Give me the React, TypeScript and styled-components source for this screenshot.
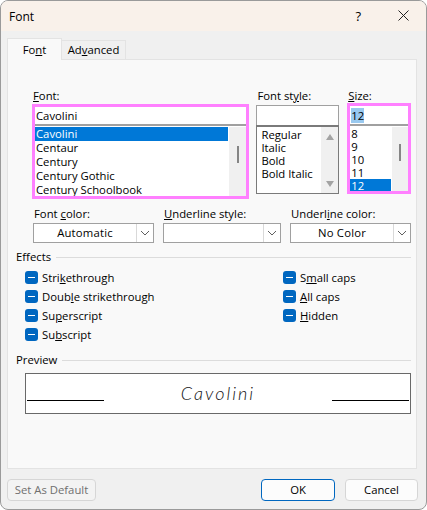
import React from "react";
import styled, { createGlobalStyle } from "styled-components";

const GlobalStyle = createGlobalStyle`
  html, body {
    margin: 0;
    padding: 0;
    background: #fff;
  }
  * {
    box-sizing: border-box;
  }
`;

const fontRows = ["Cavolini", "Centaur", "Century", "Century Gothic", "Century Schoolbook"];
const styleRows = ["Regular", "Italic", "Bold", "Bold Italic"];
const sizeRows = ["8", "9", "10", "11", "12"];

const Chevron = () => (
  <svg width="10" height="6" viewBox="0 0 10 6" fill="none">
    <path d="M1 1l4 4 4-4" stroke="#606060" strokeWidth="1" />
  </svg>
);

const Dropdown: React.FC<{ label: React.ReactNode; value?: string; width: number }> = ({ label, value, width }) => (
  <DropField $width={width}>
    <Label>{label}</Label>
    <DropBox>
      <DropValue>{value}</DropValue>
      <DropArrow>
        <Chevron />
      </DropArrow>
    </DropBox>
  </DropField>
);

const Effect: React.FC<{ children: React.ReactNode }> = ({ children }) => (
  <EffectRow>
    <CheckBox>
      <CheckDash />
    </CheckBox>
    <span>{children}</span>
  </EffectRow>
);

const App: React.FC = () => (
  <>
    <GlobalStyle />
    <Window>
      <TitleBar>
        <TitleText>Font</TitleText>
        <TitleActions>
          <HelpMark>?</HelpMark>
          <svg width="11" height="11" viewBox="0 0 11 11" fill="none">
            <path d="M.5.5l10 10M10.5.5l-10 10" stroke="#222" strokeWidth="1" />
          </svg>
        </TitleActions>
      </TitleBar>
      <Body>
        <Tabs>
          <Tab $active $width={55}>
            Fo<u>n</u>t
          </Tab>
          <Tab $width={64}>
            Ad<u>v</u>anced
          </Tab>
        </Tabs>
        <Panel>
          <ListsRow>
            <FontColumn>
              <Label>
                <u>F</u>ont:
              </Label>
              <Highlight>
                <TextInput>Cavolini</TextInput>
                <ListBox $height={70}>
                  <Rows>
                    {fontRows.map((row, i) => (
                      <Row key={row} $selected={i === 0} $height={14}>
                        {row}
                      </Row>
                    ))}
                  </Rows>
                  <ScrollTrack $width={17}>
                    <Thumb $top={19} />
                  </ScrollTrack>
                </ListBox>
              </Highlight>
            </FontColumn>
            <StyleColumn>
              <Label>
                Font st<u>y</u>le:
              </Label>
              <PlainInput />
              <PlainList>
                <Rows $inset={3}>
                  {styleRows.map((row) => (
                    <Row key={row} $height={13}>
                      {row}
                    </Row>
                  ))}
                </Rows>
                <ArrowTrack>
                  <ScrollArrow />
                  <ScrollArrow $down />
                </ArrowTrack>
              </PlainList>
            </StyleColumn>
            <SizeColumn>
              <Label>
                <u>S</u>ize:
              </Label>
              <SizeHighlight>
                <SizeInput>
                  <Selected>12</Selected>
                </SizeInput>
                <ListBox $height={65}>
                  <Rows>
                    {sizeRows.map((row) => (
                      <Row key={row} $selected={row === "12"} $height={13}>
                        {row}
                      </Row>
                    ))}
                  </Rows>
                  <ScrollTrack $width={16}>
                    <Thumb $top={17} />
                  </ScrollTrack>
                </ListBox>
              </SizeHighlight>
            </SizeColumn>
          </ListsRow>

          <DropRow>
            <Dropdown
              width={121}
              value="Automatic"
              label={
                <>
                  Font <u>c</u>olor:
                </>
              }
            />
            <Dropdown
              width={118}
              label={
                <>
                  <u>U</u>nderline style:
                </>
              }
            />
            <Dropdown
              width={121}
              value="No Color"
              label={
                <>
                  Underl<u>i</u>ne color:
                </>
              }
            />
          </DropRow>

          <SectionHead $top={0}>
            <span>Effects</span>
            <SectionLine />
          </SectionHead>
          <EffectsGrid>
            <EffectColumn>
              <Effect>
                Stri<u>k</u>ethrough
              </Effect>
              <Effect>
                Doub<u>l</u>e strikethrough
              </Effect>
              <Effect>
                Su<u>p</u>erscript
              </Effect>
              <Effect>
                Su<u>b</u>script
              </Effect>
            </EffectColumn>
            <EffectColumn>
              <Effect>
                S<u>m</u>all caps
              </Effect>
              <Effect>
                <u>A</u>ll caps
              </Effect>
              <Effect>
                <u>H</u>idden
              </Effect>
            </EffectColumn>
          </EffectsGrid>

          <SectionHead $top={9}>
            <span>Preview</span>
            <SectionLine />
          </SectionHead>
          <PreviewBox>
            <PreviewRule />
            <PreviewText>Cavolini</PreviewText>
            <PreviewRule />
          </PreviewBox>
        </Panel>
        <Footer>
          <FooterButton $width={89} $disabled>
            Set As Default
          </FooterButton>
          <FooterRight>
            <FooterButton $width={74} $primary>
              OK
            </FooterButton>
            <FooterButton $width={73}>Cancel</FooterButton>
          </FooterRight>
        </Footer>
      </Body>
    </Window>
  </>
);

const Window = styled.div`
  width: 427px;
  height: 510px;
  display: flex;
  flex-direction: column;
  border: 1px solid #9a9a9a;
  border-radius: 8px;
  overflow: hidden;
  background: #f0f0f0;
  color: #000;
  font-family: "Open Sans", "Noto Sans", sans-serif;
  font-size: 11.3px;
  line-height: 14px;
`;

const TitleBar = styled.div`
  height: 30px;
  flex: none;
  display: flex;
  align-items: center;
  justify-content: space-between;
  padding: 0 17px 0 8px;
  background: #f9f1ea;
`;

const TitleText = styled.div`
  margin-top: 1px;
  font-size: 12px;
`;

const TitleActions = styled.div`
  display: flex;
  align-items: center;
  gap: 37px;
  margin-top: -1px;
`;

const HelpMark = styled.span`
  font-size: 13px;
`;

const Body = styled.div`
  flex: 1;
  display: flex;
  flex-direction: column;
  padding: 7px 9px 8px 6px;
  min-height: 0;
`;

const Tabs = styled.div`
  display: flex;
  align-items: flex-end;
  height: 22px;
  position: relative;
  z-index: 1;
  margin-bottom: -1px;
`;

const Tab = styled.div<{ $active?: boolean; $width: number }>`
  width: ${(p) => p.$width}px;
  height: ${(p) => (p.$active ? 22 : 20)}px;
  display: flex;
  align-items: center;
  justify-content: center;
  white-space: pre;
  background: ${(p) => (p.$active ? "#f9f9f9" : "#f0f0f0")};
  border: 1px solid #e3e3e3;
  border-bottom: ${(p) => (p.$active ? "none" : "1px solid #e3e3e3")};
  border-left: ${(p) => (p.$active ? "1px solid #e3e3e3" : "none")};
`;

const Panel = styled.div`
  height: 410px;
  flex: none;
  padding: 28px 5px 0 8px;
  background: #f9f9f9;
  border: 1px solid #e3e3e3;
`;

const ListsRow = styled.div`
  display: flex;
  height: 112px;
`;

const Label = styled.div`
  height: 15px;
  line-height: 14px;
  padding-left: 1px;
  white-space: pre;
`;

const FontColumn = styled.div`
  width: 218px;
  margin-left: 16px;
  padding-top: 1px;
`;

const StyleColumn = styled.div`
  width: 83px;
  margin-left: 7px;
  padding-top: 1px;
`;

const SizeColumn = styled.div`
  width: 64px;
  margin-left: 8px;
  padding-top: 1px;
`;

const Highlight = styled.div`
  height: 95px;
  border: 3px solid #ff80ff;
  background: #fff;
`;

const SizeHighlight = styled(Highlight)`
  height: 91px;
  margin-top: -1px;
`;

const TextInput = styled.div`
  height: 19px;
  padding: 2px 0 0 1px;
  border-bottom: 2px solid #a0a0a0;
  background: #fff;
`;

const SizeInput = styled(TextInput)`
  height: 20px;
  padding-top: 3px;
`;

const Selected = styled.span`
  background: #99c9ef;
`;

const ListBox = styled.div<{ $height: number }>`
  height: ${(p) => p.$height}px;
  display: flex;
  padding-top: 1px;
  overflow: hidden;
  background: #fff;
`;

const Rows = styled.div<{ $inset?: number }>`
  flex: 1;
  padding-top: ${(p) => (p.$inset ? 1 : 0)}px;
  padding-left: ${(p) => p.$inset ?? 0}px;
`;

const Row = styled.div<{ $selected?: boolean; $height: number }>`
  height: ${(p) => p.$height}px;
  line-height: ${(p) => p.$height}px;
  padding-left: 1px;
  white-space: pre;
  background: ${(p) => (p.$selected ? "#0078d7" : "transparent")};
  color: ${(p) => (p.$selected ? "#fff" : "#000")};
`;

const ScrollTrack = styled.div<{ $width: number }>`
  width: ${(p) => p.$width}px;
  flex: none;
  margin-left: 1px;
  display: flex;
  justify-content: center;
  align-items: flex-start;
  background: #f0f0f0;
`;

const Thumb = styled.div<{ $top: number }>`
  width: 2px;
  height: 17px;
  margin-top: ${(p) => p.$top}px;
  background: #858585;
`;

const PlainInput = styled.div`
  height: 21px;
  margin-top: 1px;
  background: #fff;
  border: 1px solid #a0a0a0;
`;

const PlainList = styled.div`
  height: 69px;
  margin-top: -1px;
  display: flex;
  background: #fff;
  border: 1px solid #7a7a7a;
  border-top-width: 2px;
`;

const ArrowTrack = styled.div`
  width: 17px;
  flex: none;
  display: flex;
  flex-direction: column;
  align-items: center;
  justify-content: space-between;
  padding: 7px 0 6px;
  background: #f0f0f0;
`;

const ScrollArrow = styled.div<{ $down?: boolean }>`
  width: 0;
  height: 0;
  border-left: 4.5px solid transparent;
  border-right: 4.5px solid transparent;
  border-${(p) => (p.$down ? "top" : "bottom")}: 6px solid #a3a3a3;
`;

const DropRow = styled.div`
  display: flex;
  gap: 9px;
  margin-left: 17px;
  height: 50px;
  padding-top: 7px;
`;

const DropField = styled.div<{ $width: number }>`
  width: ${(p) => p.$width}px;
`;

const DropBox = styled.div`
  height: 20px;
  margin-top: 1px;
  display: flex;
  background: #fff;
  border: 1px solid #a0a0a0;
`;

const DropValue = styled.div`
  flex: 1;
  text-align: center;
  line-height: 18px;
  letter-spacing: 0.2px;
`;

const DropArrow = styled.div`
  width: 17px;
  flex: none;
  display: flex;
  align-items: center;
  justify-content: center;
  border-left: 1px solid #d9d9d9;
`;

const SectionHead = styled.div<{ $top: number }>`
  display: flex;
  align-items: center;
  gap: 5px;
  height: 14px;
  margin-top: ${(p) => p.$top}px;
`;

const SectionLine = styled.div`
  flex: 1;
  height: 1px;
  background: #dcdcdc;
`;

const EffectsGrid = styled.div`
  display: grid;
  grid-template-columns: 258px 1fr;
  margin: 4px 0 0 9px;
  height: 76px;
`;

const EffectColumn = styled.div`
  display: flex;
  flex-direction: column;
`;

const EffectRow = styled.div`
  height: 19px;
  display: flex;
  align-items: center;
  gap: 4px;
  white-space: pre;
`;

const CheckBox = styled.div`
  width: 13px;
  height: 13px;
  display: flex;
  align-items: center;
  justify-content: center;
  border-radius: 3px;
  background: #0067c0;
`;

const CheckDash = styled.div`
  width: 7px;
  height: 1px;
  background: #fff;
`;

const PreviewBox = styled.div`
  height: 41px;
  margin: 6px 0 0 9px;
  display: flex;
  padding: 0 1px;
  background: #fff;
  border: 1px solid #696969;
`;

const PreviewRule = styled.div`
  width: 77px;
  height: 1px;
  margin-top: 26px;
  background: #000;
`;

const PreviewText = styled.div`
  flex: 1;
  text-align: center;
  font-family: Lato, sans-serif;
  font-style: italic;
  font-weight: 300;
  font-size: 18px;
  line-height: 39px;
  letter-spacing: 2px;
  color: #111;
`;

const Footer = styled.div`
  display: flex;
  justify-content: space-between;
  margin: 10px -1px 0 0;
`;

const FooterRight = styled.div`
  display: flex;
  gap: 10px;
`;

const FooterButton = styled.div<{ $width: number; $primary?: boolean; $disabled?: boolean }>`
  width: ${(p) => p.$width}px;
  height: 22px;
  display: flex;
  align-items: center;
  justify-content: center;
  border-radius: 4px;
  background: ${(p) => (p.$disabled ? "#f3f3f3" : "#fcfcfc")};
  color: ${(p) => (p.$disabled ? "#6f6f6f" : "#000")};
  border: 1px solid ${(p) => (p.$primary ? "#0067c0" : "#d6d6d6")};
`;

export default App;
